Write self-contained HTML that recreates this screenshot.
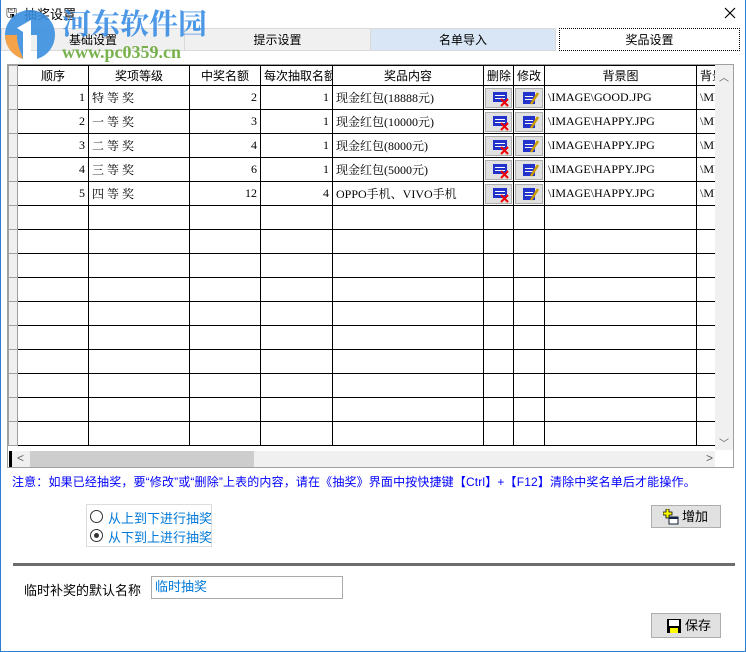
<!DOCTYPE html>
<html><head><meta charset="utf-8"><style>
*{margin:0;padding:0;box-sizing:border-box}
body{width:746px;height:652px;background:#fff;position:relative;overflow:hidden;font-family:"Liberation Serif","Noto Serif CJK SC",serif;font-size:12px;color:#000}
.a{position:absolute}
.tab{position:absolute;top:28px;height:23px;background:#f0f0f0;border:1px solid #d9d9d9;text-align:center;line-height:22px;font-family:"Liberation Sans","Noto Sans CJK SC",sans-serif;font-size:12px}
table{border-collapse:collapse;table-layout:fixed;position:absolute}
td{border:1px solid #000;height:24px;padding:0 3px;white-space:nowrap;overflow:hidden;font-size:12px}
tr.h td{height:20px;text-align:center;font-family:"Liberation Sans","Noto Sans CJK SC",sans-serif}
td.i{background:#f0f0f0;border-color:#a0a0a0;padding:0}
td.r{text-align:right}
td.b{padding:1px}
.btn{width:100%;height:20px;background:#e1e1e1;border:1px solid #adadad;position:relative}
.btn svg{position:absolute;left:6px;top:2px}
.wbtn{position:absolute;background:#e1e1e1;border:1px solid #adadad;font-family:"Liberation Sans","Noto Sans CJK SC",sans-serif;font-size:13px;line-height:21px}
</style></head><body>
<div class="a" style="left:0;top:0;width:746px;height:652px;border:1px solid #2b7cd3;border-top:none"></div>
<div class="a" style="left:6px;top:4px;font-family:'Liberation Sans','Noto Sans CJK SC',sans-serif;font-size:13px">&#x1F5AB;</div>
<div class="a" style="left:24px;top:4px;font-family:'Liberation Sans','Noto Sans CJK SC',sans-serif;font-size:13px">抽奖设置</div>
<svg class="a" style="left:724px;top:7px" width="12" height="12"><path d="M1 1L11 11M11 1L1 11" stroke="#000" stroke-width="1.2"/></svg>
<div class="tab" style="left:1px;width:184px">基础设置</div>
<div class="tab" style="left:184px;width:187px">提示设置</div>
<div class="tab" style="left:370px;width:186px;background:#d8e6f5">名单导入</div>
<div class="tab" style="left:559px;width:181px;background:#fff;border:1px dotted #000">奖品设置</div>
<svg class="a" style="left:3px;top:8px" width="54" height="54" viewBox="0 0 54 54"><path d="M27 2A25 25 0 0 0 2 27A25 25 0 0 0 20 51L20 27L34 27L34 51A25 25 0 0 0 52 27A25 25 0 0 0 27 2Z" fill="#3a8fe0" opacity=".9"/><path d="M20 51A25 25 0 0 1 2 27L14 27C14 38 18 44 20 51Z" fill="#f5a34a"/><path d="M14 20L28 12L28 45L20 45L20 24Z" fill="#fff"/></svg>
<div class="a" style="left:62px;top:6px;font-size:29px;font-weight:bold;color:#3a8ee6;font-family:'Noto Serif CJK SC',serif;opacity:.9;line-height:34px">河东软件园</div>
<div class="a" style="left:62px;top:42px;font-size:18px;font-weight:bold;color:#6aaa3a;font-family:'Liberation Serif',serif;opacity:.9">www.pc0359.cn</div>
<div class="a" style="left:7px;top:64px;width:727px;height:404px;border:1px solid #a0a0a0;background:#fff;overflow:hidden">
<table style="left:0;top:0;width:750px">
<colgroup><col style="width:9px"><col style="width:71px"><col style="width:101px"><col style="width:71px"><col style="width:72px"><col style="width:151px"><col style="width:30px"><col style="width:31px"><col style="width:152px"><col style="width:62px"></colgroup>
<tr class="h"><td class="i"></td><td>顺序</td><td>奖项等级</td><td>中奖名额</td><td>每次抽取名额</td><td>奖品内容</td><td>删除</td><td>修改</td><td>背景图</td><td style="text-align:left">背景</td></tr>
<tr><td class="i"></td><td class="r">1</td><td>特 等 奖</td><td class="r">2</td><td class="r">1</td><td>现金红包(18888元)</td><td class="b"><div class="btn"><svg width="18" height="16"><rect x="1" y="1" width="14" height="10" fill="#2233cc"/><rect x="3" y="4" width="10" height="1" fill="#fff"/><rect x="3" y="7" width="10" height="1" fill="#fff"/><path d="M9 8L16 15M16 8L9 15" stroke="#e00" stroke-width="2"/></svg></div></td><td class="b"><div class="btn"><svg width="18" height="16"><rect x="1" y="1" width="12" height="12" fill="#2233cc"/><rect x="3" y="5" width="8" height="1" fill="#fff"/><rect x="3" y="8" width="8" height="1" fill="#fff"/><path d="M16 2L9 13" stroke="#c90" stroke-width="2.5"/></svg></div></td><td>\IMAGE\GOOD.JPG</td><td>\MU</td></tr>
<tr><td class="i"></td><td class="r">2</td><td>一 等 奖</td><td class="r">3</td><td class="r">1</td><td>现金红包(10000元)</td><td class="b"><div class="btn"><svg width="18" height="16"><rect x="1" y="1" width="14" height="10" fill="#2233cc"/><rect x="3" y="4" width="10" height="1" fill="#fff"/><rect x="3" y="7" width="10" height="1" fill="#fff"/><path d="M9 8L16 15M16 8L9 15" stroke="#e00" stroke-width="2"/></svg></div></td><td class="b"><div class="btn"><svg width="18" height="16"><rect x="1" y="1" width="12" height="12" fill="#2233cc"/><rect x="3" y="5" width="8" height="1" fill="#fff"/><rect x="3" y="8" width="8" height="1" fill="#fff"/><path d="M16 2L9 13" stroke="#c90" stroke-width="2.5"/></svg></div></td><td>\IMAGE\HAPPY.JPG</td><td>\MU</td></tr>
<tr><td class="i"></td><td class="r">3</td><td>二 等 奖</td><td class="r">4</td><td class="r">1</td><td>现金红包(8000元)</td><td class="b"><div class="btn"><svg width="18" height="16"><rect x="1" y="1" width="14" height="10" fill="#2233cc"/><rect x="3" y="4" width="10" height="1" fill="#fff"/><rect x="3" y="7" width="10" height="1" fill="#fff"/><path d="M9 8L16 15M16 8L9 15" stroke="#e00" stroke-width="2"/></svg></div></td><td class="b"><div class="btn"><svg width="18" height="16"><rect x="1" y="1" width="12" height="12" fill="#2233cc"/><rect x="3" y="5" width="8" height="1" fill="#fff"/><rect x="3" y="8" width="8" height="1" fill="#fff"/><path d="M16 2L9 13" stroke="#c90" stroke-width="2.5"/></svg></div></td><td>\IMAGE\HAPPY.JPG</td><td>\MU</td></tr>
<tr><td class="i"></td><td class="r">4</td><td>三 等 奖</td><td class="r">6</td><td class="r">1</td><td>现金红包(5000元)</td><td class="b"><div class="btn"><svg width="18" height="16"><rect x="1" y="1" width="14" height="10" fill="#2233cc"/><rect x="3" y="4" width="10" height="1" fill="#fff"/><rect x="3" y="7" width="10" height="1" fill="#fff"/><path d="M9 8L16 15M16 8L9 15" stroke="#e00" stroke-width="2"/></svg></div></td><td class="b"><div class="btn"><svg width="18" height="16"><rect x="1" y="1" width="12" height="12" fill="#2233cc"/><rect x="3" y="5" width="8" height="1" fill="#fff"/><rect x="3" y="8" width="8" height="1" fill="#fff"/><path d="M16 2L9 13" stroke="#c90" stroke-width="2.5"/></svg></div></td><td>\IMAGE\HAPPY.JPG</td><td>\MU</td></tr>
<tr><td class="i"></td><td class="r">5</td><td>四 等 奖</td><td class="r">12</td><td class="r">4</td><td>OPPO手机、VIVO手机</td><td class="b"><div class="btn"><svg width="18" height="16"><rect x="1" y="1" width="14" height="10" fill="#2233cc"/><rect x="3" y="4" width="10" height="1" fill="#fff"/><rect x="3" y="7" width="10" height="1" fill="#fff"/><path d="M9 8L16 15M16 8L9 15" stroke="#e00" stroke-width="2"/></svg></div></td><td class="b"><div class="btn"><svg width="18" height="16"><rect x="1" y="1" width="12" height="12" fill="#2233cc"/><rect x="3" y="5" width="8" height="1" fill="#fff"/><rect x="3" y="8" width="8" height="1" fill="#fff"/><path d="M16 2L9 13" stroke="#c90" stroke-width="2.5"/></svg></div></td><td>\IMAGE\HAPPY.JPG</td><td>\MU</td></tr>
<tr><td class="i"></td><td></td><td></td><td></td><td></td><td></td><td></td><td></td><td></td><td></td></tr>
<tr><td class="i"></td><td></td><td></td><td></td><td></td><td></td><td></td><td></td><td></td><td></td></tr>
<tr><td class="i"></td><td></td><td></td><td></td><td></td><td></td><td></td><td></td><td></td><td></td></tr>
<tr><td class="i"></td><td></td><td></td><td></td><td></td><td></td><td></td><td></td><td></td><td></td></tr>
<tr><td class="i"></td><td></td><td></td><td></td><td></td><td></td><td></td><td></td><td></td><td></td></tr>
<tr><td class="i"></td><td></td><td></td><td></td><td></td><td></td><td></td><td></td><td></td><td></td></tr>
<tr><td class="i"></td><td></td><td></td><td></td><td></td><td></td><td></td><td></td><td></td><td></td></tr>
<tr><td class="i"></td><td></td><td></td><td></td><td></td><td></td><td></td><td></td><td></td><td></td></tr>
<tr><td class="i"></td><td></td><td></td><td></td><td></td><td></td><td></td><td></td><td></td><td></td></tr>
<tr><td class="i"></td><td></td><td></td><td></td><td></td><td></td><td></td><td></td><td></td><td></td></tr>
</table>
<div class="a" style="left:707px;top:0;width:18px;height:385px;background:#f0f0f0"></div>
<div class="a" style="left:711px;top:4px;font-size:10px;color:#606060;font-family:'Liberation Sans',sans-serif">︿</div>
<div class="a" style="left:711px;top:370px;font-size:10px;color:#606060;font-family:'Liberation Sans',sans-serif">﹀</div>
<div class="a" style="left:0;top:385px;width:725px;height:17px;background:#fff"></div>
<div class="a" style="left:1px;top:386px;width:706px;height:16px;background:#f0f0f0"></div>
<div class="a" style="left:1px;top:386px;width:3px;height:16px;background:#000"></div>
<div class="a" style="left:9px;top:386px;font-size:12px;color:#606060;font-family:'Liberation Sans',sans-serif">&lt;</div>
<div class="a" style="left:22px;top:386px;width:224px;height:16px;background:#cdcdcd"></div>
<div class="a" style="left:698px;top:386px;font-size:12px;color:#606060;font-family:'Liberation Sans',sans-serif">&gt;</div>
</div>
<div class="a" style="left:12px;top:473px;color:#0000ff;font-size:12px;font-family:'Liberation Sans','Noto Sans CJK SC',sans-serif;white-space:nowrap;letter-spacing:0.15px">注意：如果已经抽奖，要“修改”或“删除”上表的内容，请在《抽奖》界面中按快捷键【Ctrl】+【F12】清除中奖名单后才能操作。</div>
<div class="a" style="left:86px;top:504px;width:126px;height:43px;border:1px solid #dcdcdc"></div>
<div class="a" style="left:90px;top:510px;width:13px;height:13px;border:1px solid #333;border-radius:50%;background:#fff"></div>
<div class="a" style="left:90px;top:529px;width:13px;height:13px;border:1px solid #333;border-radius:50%;background:#fff"></div>
<div class="a" style="left:94px;top:533px;width:5px;height:5px;border-radius:50%;background:#333"></div>
<div class="a" style="left:108px;top:508px;color:#0078d7;font-size:13px;font-family:'Liberation Sans','Noto Sans CJK SC',sans-serif">从上到下进行抽奖</div>
<div class="a" style="left:108px;top:527px;color:#0078d7;font-size:13px;font-family:'Liberation Sans','Noto Sans CJK SC',sans-serif">从下到上进行抽奖</div>
<div class="wbtn" style="left:651px;top:505px;width:70px;height:23px"><svg class="a" style="left:11px;top:3px" width="16" height="16"><path d="M3 0h3v3h3v3h-3v3h-3v-3h-3v-3h3z" fill="#ff0" stroke="#000" stroke-width=".8"/><rect x="6" y="8" width="9" height="7" fill="#fff" stroke="#123" stroke-width="1"/><rect x="6" y="8" width="9" height="2" fill="#124"/></svg><span class="a" style="left:30px;top:0">增加</span></div>
<div class="a" style="left:13px;top:563px;width:722px;height:3px;background:#6d6d6d"></div>
<div class="a" style="left:24px;top:580px;font-size:13px;font-family:'Liberation Sans','Noto Sans CJK SC',sans-serif">临时补奖的默认名称</div>
<div class="a" style="left:151px;top:576px;width:192px;height:23px;border:1px solid #aaa;background:#fff;color:#0078d7;font-size:13px;line-height:20px;padding-left:3px;font-family:'Liberation Sans','Noto Sans CJK SC',sans-serif">临时抽奖</div>
<div class="wbtn" style="left:651px;top:613px;width:70px;height:25px;line-height:23px"><svg class="a" style="left:14px;top:4px" width="16" height="16"><rect x="1" y="1" width="14" height="14" fill="#000"/><rect x="3" y="2" width="10" height="6" fill="#fff"/><rect x="4" y="10" width="8" height="5" fill="#ff0"/></svg><span class="a" style="left:33px;top:0">保存</span></div>
</body></html>
